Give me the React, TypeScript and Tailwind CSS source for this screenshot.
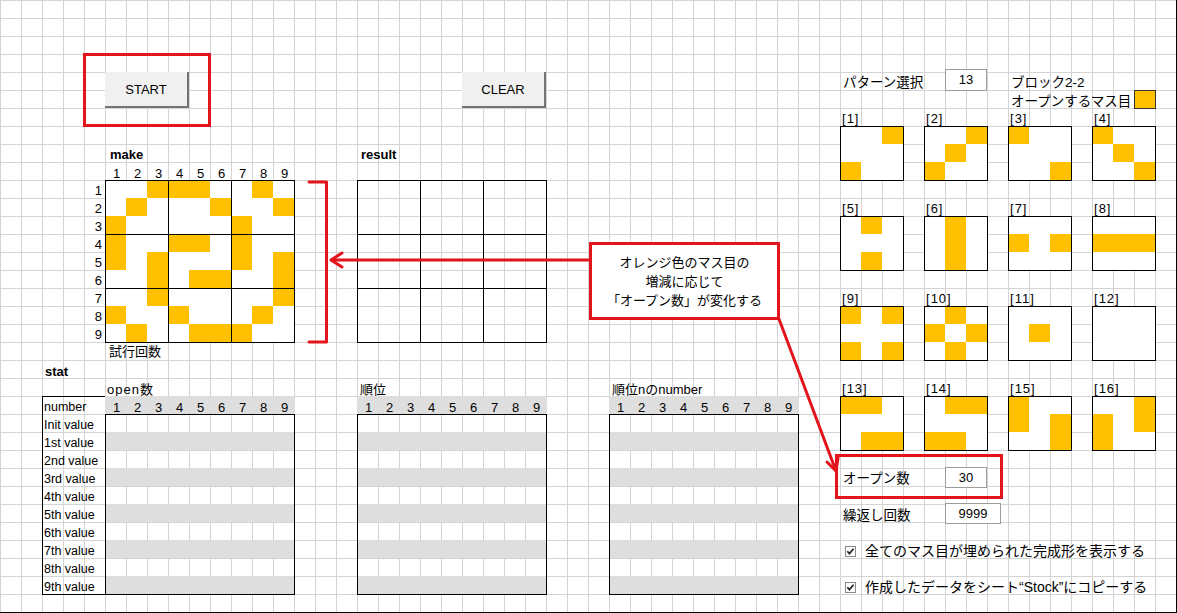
import React from 'react';

const MAKE = [
  0, 0, 1, 1, 1, 0, 0, 1, 0,
  0, 1, 0, 0, 0, 1, 0, 0, 1,
  1, 0, 0, 0, 0, 0, 1, 0, 0,
  1, 0, 0, 1, 1, 0, 1, 0, 0,
  1, 0, 1, 0, 0, 0, 1, 0, 1,
  0, 0, 1, 0, 1, 1, 0, 0, 1,
  0, 0, 1, 0, 0, 0, 0, 0, 1,
  1, 0, 0, 1, 0, 0, 0, 1, 0,
  0, 1, 0, 0, 1, 1, 1, 0, 0,
];

// 3x3 open patterns, row-major
const PATTERNS = [
  '001000100', '001010100', '100000001', '100010001',
  '010000010', '010010010', '000101000', '000111000',
  '101000101', '010101010', '000010000', '000000000',
  '110000011', '011000110', '100101001', '001101100',
];

const PAT_COLS = ['col-start-41', 'col-start-45', 'col-start-49', 'col-start-53'];
const PAT_LABEL_ROWS = ['row-start-7', 'row-start-12', 'row-start-17', 'row-start-22'];
const PAT_BOX_ROWS = ['row-start-8', 'row-start-13', 'row-start-18', 'row-start-23'];

const NUMS = [1, 2, 3, 4, 5, 6, 7, 8, 9];
const ROW_LABELS = ['Init value', '1st value', '2nd value', '3rd value', '4th value', '5th value', '6th value', '7th value', '8th value', '9th value'];

const Board = ({ data, n, cols }: { data: number[]; n: number; cols: string }) => (
  <div className={`grid w-fit border-r border-b border-black bg-white ${cols}`}>
    {data.map((v, i) => {
      const r = Math.floor(i / n);
      const c = i % n;
      return (
        <div
          key={i}
          className={`h-[18px] w-[21px] border-black ${c % 3 === 0 ? 'border-l' : ''} ${r % 3 === 0 ? 'border-t' : ''} ${v ? 'bg-[#ffc000]' : ''}`}
        />
      );
    })}
  </div>
);

const StatTable = () => (
  <div className="w-[190px]">
    <div className="grid h-[18px] w-[190px] grid-cols-[repeat(9,21px)] bg-[#dedede]">
      {NUMS.map((n) => (
        <div key={n} className="h-[18px] pl-[2px] text-center text-[13px] leading-[23px]">{n}</div>
      ))}
    </div>
    <div className="border-x border-b border-black">
      {ROW_LABELS.map((l, i) => (
        <div key={l} className={`h-[18px] border-black ${i === 0 ? 'border-t' : ''} ${i % 2 === 1 ? 'bg-[#dedede]' : ''}`} />
      ))}
    </div>
  </div>
);

const Check = () => (
  <svg width="11" height="11" viewBox="0 0 11 11" className="shrink-0">
    <rect x="0.5" y="0.5" width="10" height="10" fill="#fff" stroke="#8a8a8a" />
    <path d="M2.3 5.3 L4.4 7.6 L8.6 2.8" stroke="#222" strokeWidth="1.7" fill="none" />
  </svg>
);

const App: React.FC = () => {
  return (
    <div className="relative h-[613px] w-[1177px] overflow-hidden border-r border-b border-black bg-white font-['Liberation_Sans','Noto_Sans_CJK_JP',sans-serif] text-black">
      <div className="grid h-[612px] w-[1176px] grid-cols-[repeat(56,21px)] grid-rows-[repeat(34,18px)] bg-[linear-gradient(to_right,#d4d4d4_1px,transparent_1px),linear-gradient(to_bottom,#d4d4d4_1px,transparent_1px)] bg-[size:21px_18px]">
        {/* buttons */}
        <button className="col-span-4 col-start-6 row-span-2 row-start-5 border-r-2 border-b-2 border-[#747474] bg-[#f0f0f0] pt-[2px] text-[13px]">START</button>
        <button className="col-span-4 col-start-23 row-span-2 row-start-5 border-r-2 border-b-2 border-[#747474] bg-[#f0f0f0] pt-[2px] text-[13px]">CLEAR</button>

        {/* make */}
        <div className="col-span-3 col-start-6 row-start-9 h-[18px] pl-[5px] text-[13px] font-bold leading-[22px]">make</div>
        <div className="col-span-9 col-start-6 row-start-10 grid grid-cols-[repeat(9,21px)]">
          {NUMS.map((n) => (
            <div key={n} className="h-[18px] pl-[2px] text-center text-[13px] leading-[23px]">{n}</div>
          ))}
        </div>
        <div className="col-start-5 row-span-9 row-start-11 flex flex-col">
          {NUMS.map((n) => (
            <div key={n} className="h-[18px] pr-[3px] text-right text-[13px] leading-[21px]">{n}</div>
          ))}
        </div>
        <div className="col-span-9 col-start-6 row-span-9 row-start-11">
          <Board data={MAKE} n={9} cols="grid-cols-[repeat(9,21px)]" />
        </div>
        <div className="col-span-4 col-start-6 row-start-20 h-[18px] whitespace-nowrap pl-[4px] text-[13px] leading-[19px]">試行回数</div>

        {/* result */}
        <div className="col-span-3 col-start-18 row-start-9 h-[18px] pl-[4px] text-[13px] font-bold leading-[22px]">result</div>
        <div className="col-span-9 col-start-18 row-span-9 row-start-11">
          <div className="grid w-fit grid-cols-[repeat(3,63px)] border-r border-b border-black">
            {NUMS.map((n) => (
              <div key={n} className="h-[54px] w-[63px] border-t border-l border-black" />
            ))}
          </div>
        </div>

        {/* stat */}
        <div className="col-span-2 col-start-3 row-start-21 h-[18px] pl-[3px] text-[13px] font-bold leading-[23px]">stat</div>
        <div className="col-span-3 col-start-6 row-start-22 h-[18px] pl-[2px] text-[13px] leading-[24px] tracking-[1px]">open数</div>
        <div className="col-span-3 col-start-3 row-span-11 row-start-23">
          <div className="w-[64px] border border-black">
            <div className="h-[17px] pl-[1px] text-[12.5px] leading-[21px]">number</div>
            {ROW_LABELS.map((l) => (
              <div key={l} className="h-[18px] whitespace-nowrap pl-[1px] text-[12.5px] leading-[23px]">{l}</div>
            ))}
          </div>
        </div>
        <div className="col-span-9 col-start-6 row-span-11 row-start-23">
          <StatTable />
        </div>

        <div className="col-span-3 col-start-18 row-start-22 h-[18px] pl-[3px] text-[13px] leading-[24px]">順位</div>
        <div className="col-span-9 col-start-18 row-span-11 row-start-23">
          <StatTable />
        </div>

        <div className="col-span-6 col-start-30 row-start-22 h-[18px] whitespace-nowrap pl-[3px] text-[13px] leading-[24px]">順位nのnumber</div>
        <div className="col-span-9 col-start-30 row-span-11 row-start-23">
          <StatTable />
        </div>

        {/* right panel */}
        <div className="col-span-5 col-start-41 row-start-5 h-[18px] whitespace-nowrap pl-[3px] text-[13.5px] leading-[22px]">パターン選択</div>
        <div className="col-span-2 col-start-46 row-start-5 -mt-[3px] flex h-[22px] w-[42px] items-center justify-center border border-[#9c9c9c] bg-white text-[13px]">13</div>
        <div className="col-span-5 col-start-49 row-start-5 h-[18px] whitespace-nowrap pl-[3px] text-[13.5px] leading-[22px]">ブロック2-2</div>
        <div className="col-span-6 col-start-49 row-start-6 h-[18px] whitespace-nowrap pl-[3px] text-[13.5px] leading-[23px]">オープンするマス目</div>
        <div className="col-start-55 row-start-6 h-[19px] w-[22px] border border-[#333] bg-[#ffc000]" />

        {PATTERNS.map((p, i) => {
          const col = PAT_COLS[i % 4];
          const row = Math.floor(i / 4);
          return (
            <React.Fragment key={i}>
              <div className={`${col} ${PAT_LABEL_ROWS[row]} col-span-3 h-[18px] pl-[2px] text-[13px] leading-[22px] tracking-[1px]`}>[{i + 1}]</div>
              <div className={`${col} ${PAT_BOX_ROWS[row]} col-span-3 row-span-3`}>
                <Board data={p.split('').map(Number)} n={3} cols="grid-cols-[repeat(3,21px)]" />
              </div>
            </React.Fragment>
          );
        })}

        <div className="col-span-5 col-start-41 row-start-27 h-[18px] whitespace-nowrap pl-[3px] text-[13.5px] leading-[21px]">オープン数</div>
        <div className="col-span-2 col-start-46 row-start-27 -mt-[1px] flex h-[21px] w-[42px] items-center justify-center border border-[#9c9c9c] bg-white text-[13px]">30</div>
        <div className="col-span-5 col-start-41 row-start-29 h-[18px] whitespace-nowrap pl-[3px] text-[13.5px] leading-[23px]">繰返し回数</div>
        <div className="col-span-3 col-start-46 row-start-29 -mt-[1px] flex h-[21px] w-[56px] items-center justify-center border border-[#9c9c9c] bg-white text-[13px]">9999</div>

        <div className="col-span-15 col-start-41 row-start-31 mt-[2px] flex h-[18px] items-center gap-[9px] whitespace-nowrap pl-[5px] text-[14px]">
          <Check />
          <span>全てのマス目が埋められた完成形を表示する</span>
        </div>
        <div className="col-span-15 col-start-41 row-start-33 mt-[2px] flex h-[18px] items-center gap-[9px] whitespace-nowrap pl-[5px] text-[14px]">
          <Check />
          <span>作成したデータをシート“Stock”にコピーする</span>
        </div>
      </div>

      {/* annotations */}
      <div className="absolute left-[83px] top-[53px] h-[74px] w-[128px] border-[3px] border-[#e3141b]" />
      <div className="absolute left-[835px] top-[454px] h-[45px] w-[168px] border-[3px] border-[#e3141b]" />
      <svg className="pointer-events-none absolute left-0 top-0" width="1177" height="613">
        <g stroke="#e3141b" strokeWidth="3" fill="none" strokeLinejoin="round" strokeLinecap="round">
          <path d="M309 182 H326.5 V342 H309" />
          <path d="M590 260 H332" />
          <path d="M342 253 L331 260 L342 267" />
          <path d="M779 319 L836 471" />
          <path d="M838 458 L836 471 L827 462" />
        </g>
      </svg>
      <div className="absolute left-[589px] top-[242px] flex h-[78px] w-[191px] flex-col items-center justify-center border-[3px] border-[#e3141b] bg-white text-[13px] leading-[19px]">
        <div>オレンジ色のマス目の</div>
        <div>増減に応じて</div>
        <div>「オープン数」が変化する</div>
      </div>
    </div>
  );
};

export default App;
